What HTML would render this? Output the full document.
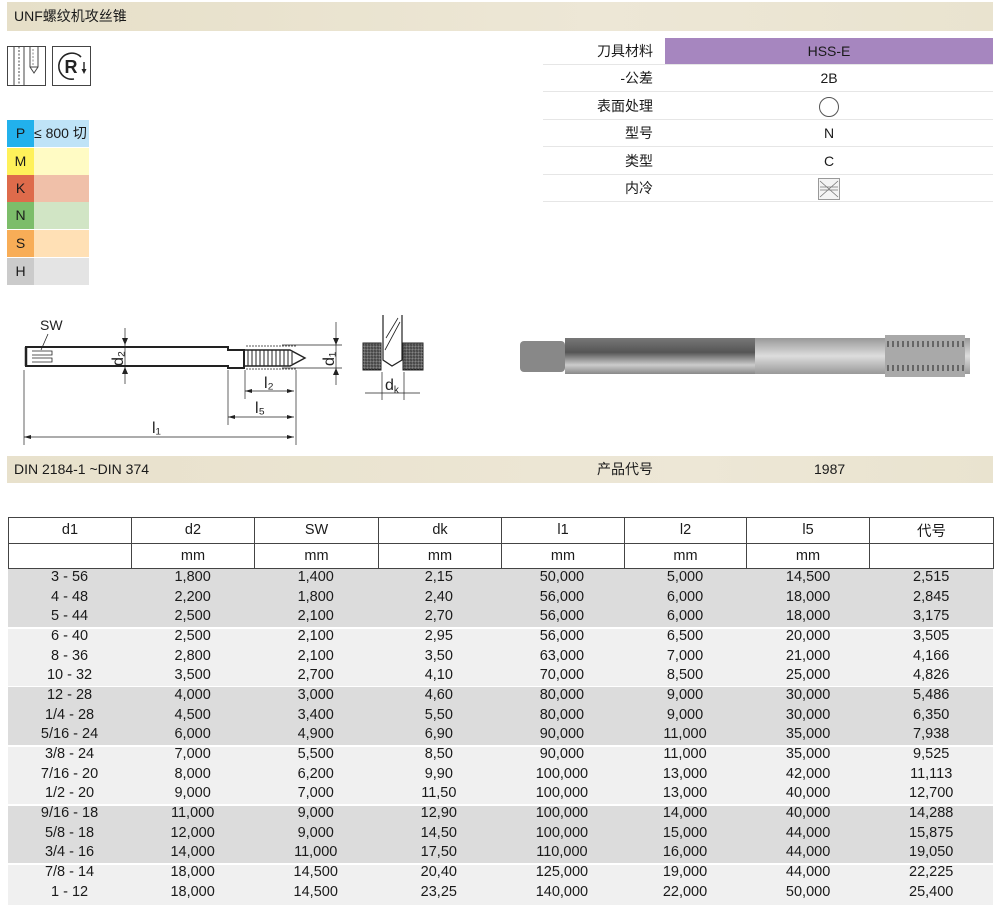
<!DOCTYPE html>
<html><head><meta charset="utf-8">
<style>
*{margin:0;padding:0;box-sizing:border-box}
body{width:1000px;height:915px;background:#fff;position:relative;font-family:"Liberation Sans","Noto Sans CJK SC",sans-serif;color:#1a1a1a;overflow:hidden}
.a{position:absolute}
.hdr{left:7px;top:2px;width:986px;height:29px;background:linear-gradient(90deg,#e6dfc8,#ede7d6 60%,#e9e3cf);font-size:14px;line-height:29px;padding-left:7px}
.prop{left:543px;width:450px;height:27px;font-size:14px;line-height:27px;border-bottom:1px solid #e6e6e6}
.prop .l{position:absolute;right:340px;top:0;white-space:nowrap}
.prop .v{position:absolute;left:122px;width:328px;text-align:center;top:0}
.mat{left:7px;width:82px;height:27px;font-size:14px;line-height:27px;white-space:nowrap;overflow:hidden}
.mat span{display:inline-block;width:27px;height:100%;text-align:center}
table{position:absolute;left:8px;top:517px;width:985px;border-collapse:collapse;font-size:14.5px;table-layout:fixed}
td{text-align:center;border:1px solid #444;height:25.5px}
.r{position:absolute;left:8px;width:985px;height:19.6px;font-size:14.5px;line-height:19.6px}
.r div{float:left;width:123.1px;text-align:center}
.b{position:absolute;left:8px;width:985px}
</style></head><body>
<div class="a hdr">UNF螺纹机攻丝锥</div>

<svg class="a" style="left:6px;top:45px" width="88" height="43" viewBox="0 0 88 43">
<rect x="1.5" y="1.5" width="38" height="39" fill="#fff" stroke="#444"/>
<line x1="8" y1="1.5" x2="8" y2="40.5" stroke="#444"/>
<line x1="13" y1="1.5" x2="13" y2="40.5" stroke="#444" stroke-dasharray="2,1.5"/>
<line x1="18" y1="1.5" x2="18" y2="40.5" stroke="#444"/>
<path d="M24 1.5V22L28 28L32 22V1.5" fill="none" stroke="#444"/>
<line x1="27" y1="4" x2="27" y2="22" stroke="#888" stroke-dasharray="2,1.5"/>
<path d="M24 22H32" stroke="#444"/>
<rect x="46.5" y="1.5" width="38" height="39" fill="#fff" stroke="#444"/>
<path d="M75 12A13 13 0 1 0 68 34" fill="none" stroke="#222" stroke-width="1.6"/>
<path d="M78 17V26" stroke="#222" stroke-width="1.4"/><path d="M75.5 24L78 29L80.5 24Z" fill="#222"/>
<text x="58.5" y="28" font-family="Liberation Sans" font-weight="bold" font-size="18" fill="#222">R</text>
</svg>

<div class="a prop" style="top:38px"><span class="l">刀具材料</span><span class="v" style="background:#a686bf;height:26px">HSS-E</span></div>
<div class="a prop" style="top:65px"><span class="l">-公差</span><span class="v">2B</span></div>
<div class="a prop" style="top:93px"><span class="l">表面处理</span><span class="v"><svg width="22" height="22" style="vertical-align:middle" viewBox="0 0 22 22"><circle cx="11" cy="11" r="9.5" fill="none" stroke="#555"/></svg></span></div>
<div class="a prop" style="top:120px"><span class="l">型号</span><span class="v">N</span></div>
<div class="a prop" style="top:148px"><span class="l">类型</span><span class="v">C</span></div>
<div class="a prop" style="top:175px"><span class="l">内冷</span><span class="v"><svg width="22" height="22" style="vertical-align:middle" viewBox="0 0 22 22"><rect x="0.5" y="0.5" width="21" height="21" fill="#f4f4f4" stroke="#999"/><path d="M2 3L20 19M2 19L20 3M2 9H20M2 12H20" stroke="#777" stroke-width="0.8"/></svg></span></div>

<div class="a mat" style="top:120px;background:#bfe3f7"><span style="background:#22b1ec">P</span>≤ 800 切</div>
<div class="a mat" style="top:148px;background:#fffbc4"><span style="background:#fff15a">M</span></div>
<div class="a mat" style="top:175px;background:#f0c0a9"><span style="background:#de6b4b">K</span></div>
<div class="a mat" style="top:202px;background:#d1e5c5"><span style="background:#7cbd6a">N</span></div>
<div class="a mat" style="top:230px;background:#ffe0b5"><span style="background:#f8ad57">S</span></div>
<div class="a mat" style="top:258px;background:#e4e4e4"><span style="background:#cbcbcb">H</span></div>

<svg class="a" style="left:0;top:300px" width="450" height="150" viewBox="0 0 450 150" font-family="Liberation Sans" fill="none" stroke="#222">
<text x="40" y="30" font-size="14" fill="#222" stroke="none">SW</text>
<path d="M48 34L41 50" stroke-width="0.8"/>
<path d="M26 47H228V50H244V54H244V64H244V68H228V66H26Z" stroke-width="2"/>
<path d="M26 47V66" stroke-width="2.5"/>
<path d="M32 51H52V55H32M32 58H52V62H32" stroke-width="0.8"/>
<path d="M244 50H290L305 58L290 66H244" stroke-width="1.4"/>
<path d="M248 50V66M252 50V66M256 50V66M260 50V66M264 50V66M268 50V66M272 50V66M276 50V66M280 50V66M284 50V66M288 50V66M292 52V64" stroke-width="1"/>
<path d="M246 46H296" stroke-width="0.7" stroke-dasharray="2,1"/><path d="M246 69H296" stroke-width="0.7" stroke-dasharray="2,1"/>
<path d="M125 28V84M336 22V85M282 45H342M282 68H342" stroke-width="0.7"/>
<path d="M125 45L122 38H128ZM125 67L122 74H128ZM336 45L333 38H339ZM336 68L333 75H339Z" fill="#222" stroke="none"/>
<text x="110" y="63" font-size="16" fill="#222" stroke="none" transform="rotate(-90 118 58)">d₂</text>
<text x="321" y="63" font-size="16" fill="#222" stroke="none" transform="rotate(-90 329 58)">d₁</text>
<path d="M24 70V145M296 70V145M245 70V99M228 70V125" stroke-width="0.7"/>
<path d="M245 91H294M228 117H294M24 137H294" stroke-width="0.7"/>
<path d="M245 91L252 89V93ZM294 91L287 89V93ZM228 117L235 115V119ZM294 117L287 115V119ZM24 137L31 135V139ZM294 137L287 135V139Z" fill="#222" stroke="none"/>
<text x="264" y="88" font-size="16" fill="#222" stroke="none">l₂</text>
<text x="255" y="113" font-size="16" fill="#222" stroke="none">l₅</text>
<text x="152" y="133" font-size="16" fill="#222" stroke="none">l₁</text>
<defs><pattern id="h" width="3" height="3" patternUnits="userSpaceOnUse"><rect width="3" height="3" fill="#bbb"/><path d="M0 3L3 0" stroke="#666" stroke-width="0.6"/></pattern></defs>
<rect x="363" y="43" width="18" height="27" fill="url(#h)" stroke="#222"/>
<rect x="403" y="43" width="20" height="27" fill="url(#h)" stroke="#222"/>
<path d="M383 15V60L392 66L402 60V15" stroke-width="1.2" fill="#fff"/>
<path d="M385 50L400 22M386 38L398 18" stroke-width="0.8"/>
<path d="M382 72V100M404 72V100M365 93H420" stroke-width="0.7"/>
<text x="385" y="90" font-size="16" fill="#222" stroke="none">d<tspan font-size="10" dy="3">k</tspan></text>
</svg>

<svg class="a" style="left:515px;top:330px" width="455" height="60" viewBox="0 0 455 60">
<defs><linearGradient id="g" x1="0" y1="0" x2="0" y2="1"><stop offset="0" stop-color="#777"/><stop offset="0.4" stop-color="#555"/><stop offset="0.75" stop-color="#ccc"/><stop offset="1" stop-color="#888"/></linearGradient>
<linearGradient id="g2" x1="0" y1="0" x2="0" y2="1"><stop offset="0" stop-color="#999"/><stop offset="0.5" stop-color="#ddd"/><stop offset="1" stop-color="#999"/></linearGradient></defs>
<rect x="5" y="11" width="45" height="31" rx="4" fill="#888"/>
<rect x="50" y="8" width="200" height="36" fill="url(#g)"/>
<rect x="240" y="8" width="215" height="36" fill="url(#g2)"/>
<rect x="370" y="5" width="80" height="42" fill="#a9a9a9"/>
<path d="M372 14H450M372 38H450" stroke="#666" stroke-width="6" stroke-dasharray="2,3"/>
</svg>

<div class="a" style="left:7px;top:456px;width:986px;height:27px;background:linear-gradient(90deg,#e8e1cc,#ede7d6 70%,#e9e3cf);font-size:14px;line-height:27px">
<span class="a" style="left:7px">DIN 2184-1 ~DIN 374</span><span class="a" style="left:590px">产品代号</span><span class="a" style="left:807px">1987</span></div>

<table>
<colgroup><col style="width:123px"><col style="width:123px"><col style="width:124px"><col style="width:123px"><col style="width:123px"><col style="width:122px"><col style="width:123px"><col style="width:124px"></colgroup>
<tr><td>d1</td><td>d2</td><td>SW</td><td>dk</td><td>l1</td><td>l2</td><td>l5</td><td>代号</td></tr>
<tr><td></td><td>mm</td><td>mm</td><td>mm</td><td>mm</td><td>mm</td><td>mm</td><td></td></tr>
</table>

<div class="b" style="top:569px;height:58px;background:#dcdcdc"></div>
<div class="b" style="top:629px;height:57px;background:#f0f0f0"></div>
<div class="b" style="top:687px;height:58px;background:#dcdcdc"></div>
<div class="b" style="top:747px;height:57px;background:#f0f0f0"></div>
<div class="b" style="top:806px;height:57px;background:#dcdcdc"></div>
<div class="b" style="top:865px;height:40px;background:#f0f0f0"></div>

<div class="r" style="top:568px"><div>3 - 56</div><div>1,800</div><div>1,400</div><div>2,15</div><div>50,000</div><div>5,000</div><div>14,500</div><div>2,515</div></div>
<div class="r" style="top:587.6px"><div>4 - 48</div><div>2,200</div><div>1,800</div><div>2,40</div><div>56,000</div><div>6,000</div><div>18,000</div><div>2,845</div></div>
<div class="r" style="top:607.2px"><div>5 - 44</div><div>2,500</div><div>2,100</div><div>2,70</div><div>56,000</div><div>6,000</div><div>18,000</div><div>3,175</div></div>
<div class="r" style="top:627px"><div>6 - 40</div><div>2,500</div><div>2,100</div><div>2,95</div><div>56,000</div><div>6,500</div><div>20,000</div><div>3,505</div></div>
<div class="r" style="top:646.6px"><div>8 - 36</div><div>2,800</div><div>2,100</div><div>3,50</div><div>63,000</div><div>7,000</div><div>21,000</div><div>4,166</div></div>
<div class="r" style="top:666.2px"><div>10 - 32</div><div>3,500</div><div>2,700</div><div>4,10</div><div>70,000</div><div>8,500</div><div>25,000</div><div>4,826</div></div>
<div class="r" style="top:686px"><div>12 - 28</div><div>4,000</div><div>3,000</div><div>4,60</div><div>80,000</div><div>9,000</div><div>30,000</div><div>5,486</div></div>
<div class="r" style="top:705.6px"><div>1/4 - 28</div><div>4,500</div><div>3,400</div><div>5,50</div><div>80,000</div><div>9,000</div><div>30,000</div><div>6,350</div></div>
<div class="r" style="top:725.2px"><div>5/16 - 24</div><div>6,000</div><div>4,900</div><div>6,90</div><div>90,000</div><div>11,000</div><div>35,000</div><div>7,938</div></div>
<div class="r" style="top:745px"><div>3/8 - 24</div><div>7,000</div><div>5,500</div><div>8,50</div><div>90,000</div><div>11,000</div><div>35,000</div><div>9,525</div></div>
<div class="r" style="top:764.6px"><div>7/16 - 20</div><div>8,000</div><div>6,200</div><div>9,90</div><div>100,000</div><div>13,000</div><div>42,000</div><div>11,113</div></div>
<div class="r" style="top:784.2px"><div>1/2 - 20</div><div>9,000</div><div>7,000</div><div>11,50</div><div>100,000</div><div>13,000</div><div>40,000</div><div>12,700</div></div>
<div class="r" style="top:804px"><div>9/16 - 18</div><div>11,000</div><div>9,000</div><div>12,90</div><div>100,000</div><div>14,000</div><div>40,000</div><div>14,288</div></div>
<div class="r" style="top:823.6px"><div>5/8 - 18</div><div>12,000</div><div>9,000</div><div>14,50</div><div>100,000</div><div>15,000</div><div>44,000</div><div>15,875</div></div>
<div class="r" style="top:843.2px"><div>3/4 - 16</div><div>14,000</div><div>11,000</div><div>17,50</div><div>110,000</div><div>16,000</div><div>44,000</div><div>19,050</div></div>
<div class="r" style="top:863px"><div>7/8 - 14</div><div>18,000</div><div>14,500</div><div>20,40</div><div>125,000</div><div>19,000</div><div>44,000</div><div>22,225</div></div>
<div class="r" style="top:882.6px"><div>1 - 12</div><div>18,000</div><div>14,500</div><div>23,25</div><div>140,000</div><div>22,000</div><div>50,000</div><div>25,400</div></div>
</body></html>
